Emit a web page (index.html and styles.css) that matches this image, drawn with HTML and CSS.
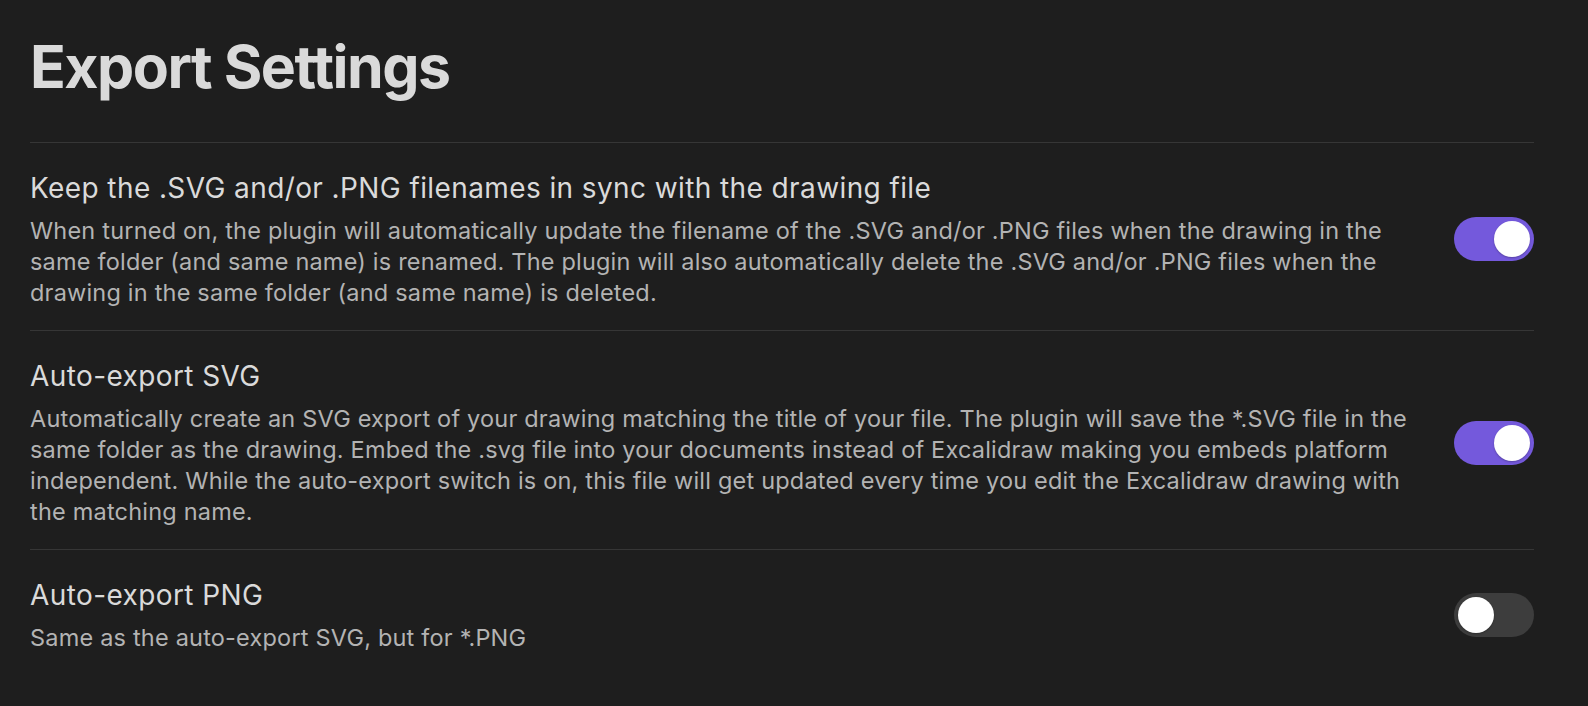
FILE: index.html
```html
<!DOCTYPE html>
<html lang="en">
<head>
<meta charset="utf-8">
<title>Export Settings</title>
<link rel="stylesheet" href="styles.css">
</head>
<body>
<main class="settings">
  <h1 class="page-title">Export Settings</h1>

  <div class="setting-item">
    <div class="setting-info">
      <div class="setting-name">Keep the .SVG and/or .PNG filenames in sync with the drawing file</div>
      <div class="setting-desc">When turned on, the plugin will automatically update the filename of the .SVG and/or .PNG files when the drawing in the same folder (and same name) is renamed. The plugin will also automatically delete the .SVG and/or .PNG files when the drawing in the same folder (and same name) is deleted.</div>
    </div>
    <div class="setting-control">
      <div class="toggle is-on"><span class="knob"></span></div>
    </div>
  </div>

  <div class="setting-item">
    <div class="setting-info">
      <div class="setting-name">Auto-export SVG</div>
      <div class="setting-desc">Automatically create an SVG export of your drawing matching the title of your file. The plugin will save the *.SVG file in the same folder as the drawing. Embed the .svg file into your documents instead of Excalidraw making you embeds platform independent. While the auto-export switch is on, this file will get updated every time you edit the Excalidraw drawing with the matching name.</div>
    </div>
    <div class="setting-control">
      <div class="toggle is-on"><span class="knob"></span></div>
    </div>
  </div>

  <div class="setting-item">
    <div class="setting-info">
      <div class="setting-name">Auto-export PNG</div>
      <div class="setting-desc">Same as the auto-export SVG, but for *.PNG</div>
    </div>
    <div class="setting-control">
      <div class="toggle"><span class="knob"></span></div>
    </div>
  </div>
</main>
</body>
</html>
```
FILE: styles.css
```css
html, body {
  margin: 0;
  padding: 0;
  background: #1e1e1e;
}

body {
  font-family: Inter, "Noto Sans", "Liberation Sans", sans-serif;
  color: #dadada;
  overflow: hidden;
}

.settings {
  margin: 0 54px 0 30px;
  padding-top: 31px;
}

.page-title {
  margin: 0 0 40px 0;
  font-size: 59px;
  line-height: 71px;
  font-weight: 700;
  letter-spacing: -1.5px;
  color: #dadada;
}

.setting-item {
  display: flex;
  align-items: center;
  border-top: 1px solid #363636;
  padding: 27px 0 22px 0;
}

.setting-item:last-child {
  padding-bottom: 18px;
}

.setting-info {
  flex: 1 1 auto;
  margin-right: 29px;
}

.setting-name {
  font-size: 28px;
  line-height: 36px;
  letter-spacing: 0.4px;
  color: #dadada;
}

.setting-desc {
  margin-top: 9px;
  font-size: 23.5px;
  line-height: 31px;
  letter-spacing: 0.2px;
  color: #b3b3b3;
}

.setting-control {
  flex: 0 0 auto;
  display: flex;
  align-items: center;
}

.toggle {
  width: 80px;
  height: 44px;
  border-radius: 22px;
  background: #3d3d3d;
  box-sizing: border-box;
  padding: 4px;
  display: flex;
  justify-content: flex-start;
}

.toggle.is-on {
  background: #7459dc;
  justify-content: flex-end;
}

.knob {
  width: 36px;
  height: 36px;
  border-radius: 50%;
  background: #ffffff;
  box-shadow: 0 1px 2px rgba(0, 0, 0, 0.25);
}
```
